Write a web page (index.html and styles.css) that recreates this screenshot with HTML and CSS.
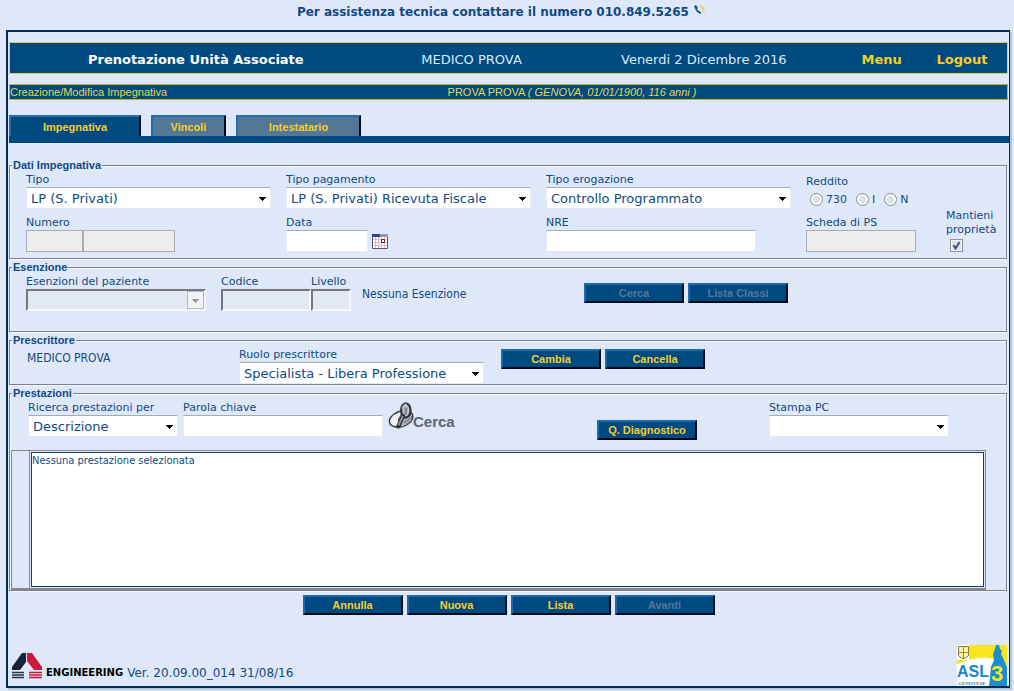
FILE: index.html
```html
<!DOCTYPE html>
<html lang="it">
<head>
<meta charset="utf-8">
<meta name="viewport" content="width=device-width, initial-scale=1">
<title>Prenotazione Unità Associate</title>
<link rel="stylesheet" href="styles.css">
</head>
<body>
<p class="support">Per assistenza tecnica contattare il numero 010.849.5265
  <svg class="phone" viewBox="0 0 14 12" aria-hidden="true"><path d="M1 2 3 1 5 4 4 5Q5 7 8 8L8 10Q3 9 1 2Z" fill="#1c5590"/><path d="M7 1Q12 2 12 8L10 9Q10 4 6 3Z" fill="#f7d672"/></svg>
</p>
<div class="frame">
  <header class="topbar">
    <h1>Prenotazione Unità Associate</h1>
    <span>MEDICO PROVA</span>
    <span>Venerdi 2 Dicembre 2016</span>
    <a href="#menu">Menu</a>
    <a href="#logout">Logout</a>
  </header>
  <div class="subbar">
    <span>Creazione/Modifica Impegnativa</span>
    <span>PROVA PROVA <i>( GENOVA, 01/01/1900, 116 anni )</i></span>
  </div>
  <nav class="tabs">
    <button type="button" class="tab tab-wide active">Impegnativa</button>
    <button type="button" class="tab tab-small">Vincoli</button>
    <button type="button" class="tab tab-medium">Intestatario</button>
  </nav>

  <form>
    <fieldset>
      <legend>Dati Impegnativa</legend>
      <div class="data-grid">
        <div class="field"><label for="tipo">Tipo</label><select id="tipo" class="w-select"><option>LP (S. Privati)</option></select></div>
        <div class="field"><label for="pagamento">Tipo pagamento</label><select id="pagamento" class="w-select"><option>LP (S. Privati) Ricevuta Fiscale</option></select></div>
        <div class="field"><label for="erogazione">Tipo erogazione</label><select id="erogazione" class="w-select"><option>Controllo Programmato</option></select></div>
        <div class="field income" role="radiogroup" aria-labelledby="reddito">
          <span id="reddito">Reddito</span>
          <div class="radios">
            <label><input type="radio" name="reddito">730</label>
            <label><input type="radio" name="reddito">I</label>
            <label><input type="radio" name="reddito">N</label>
          </div>
        </div>
        <div class="field keep"><label for="mantieni">Mantieni proprietà</label><input type="checkbox" id="mantieni" checked></div>
        <div class="field"><label for="numero">Numero</label>
          <div class="row"><input id="numero" class="w-num1" type="text" disabled><input class="w-num2" type="text" aria-label="Numero, seconda parte" disabled></div></div>
        <div class="field"><label for="data">Data</label>
          <div class="row date-row"><input id="data" class="w-date" type="text">
            <button type="button" class="icon-button" aria-label="Calendario"><svg class="calendar" viewBox="0 0 16 15" aria-hidden="true"><path fill="#fff" d="M0 0h16v15H0z"/><path d="M1 5.500h14M1 8.500h14M1 11.500h14M3.500 3v11M6.500 3v11M9.500 3v11M12.500 3v11" stroke="#e3b9bd"/><path fill="#34419a" d="M0 0h8v3H0z"/><path fill="#9298ad" d="M8 0h8v3H8z"/><path d="M.5 3v11.500h15V3" fill="none" stroke="#55546c"/><path d="M9.500 5.500h3v3h-3z" fill="#fff" stroke="#6d2434"/></svg></button></div></div>
        <div class="field"><label for="nre">NRE</label><input id="nre" class="w-nre" type="text"></div>
        <div class="field"><label for="scheda">Scheda di PS</label><input id="scheda" class="w-ps" type="text" disabled></div>
      </div>
    </fieldset>

    <fieldset>
      <legend>Esenzione</legend>
      <div class="line exemption">
        <div class="field"><label for="esenzioni">Esenzioni del paziente</label><select id="esenzioni" class="w-exempt sunken" disabled><option></option></select></div>
        <div class="field code"><label for="codice">Codice</label><input id="codice" class="w-code sunken" type="text" disabled></div>
        <div class="field"><label for="livello">Livello</label><input id="livello" class="w-level sunken" type="text" disabled></div>
        <span class="plain">Nessuna Esenzione</span>
        <div class="actions">
          <button type="button" class="btn" disabled>Cerca</button>
          <button type="button" class="btn" disabled>Lista Classi</button>
        </div>
      </div>
    </fieldset>

    <fieldset>
      <legend>Prescrittore</legend>
      <div class="line prescriber">
        <span class="plain">MEDICO PROVA</span>
        <div class="field"><label for="ruolo">Ruolo prescrittore</label><select id="ruolo" class="w-select"><option>Specialista - Libera Professione</option></select></div>
        <div class="actions">
          <button type="button" class="btn">Cambia</button>
          <button type="button" class="btn">Cancella</button>
        </div>
      </div>
    </fieldset>

    <fieldset class="services">
      <legend>Prestazioni</legend>
      <div class="line search">
        <div class="field"><label for="ricerca">Ricerca prestazioni per</label><select id="ricerca" class="w-search"><option>Descrizione</option></select></div>
        <div class="field"><label for="parola">Parola chiave</label><input id="parola" class="w-key" type="text"></div>
        <button type="button" class="find">
          <svg viewBox="0 0 32 30" aria-hidden="true"><ellipse cx="14" cy="18" rx="13" ry="8" fill="#f0f1f3" stroke="#3b3d43" stroke-width="1.500" transform="rotate(-20 14 18)"/><path d="M14 27Q8 20 14 14 20 10 26 16L25 21Q20 26 14 27Z" fill="#aeb3bb" stroke="#34363c"/><path d="M17 18 23 14M17 22 25 17M19 24 25 20" stroke="#5f6570"/><ellipse cx="19" cy="9" rx="5" ry="7.500" fill="#c5cbd3" stroke="#34363c" stroke-width="2.500"/><path d="M15 7Q16 2 20 2.500" fill="none" stroke="#d6dae0"/><path d="M16 15 11 26" stroke="#2e3036" stroke-width="4.500" stroke-linecap="round"/><path d="M16 15 11 25" stroke="#9399a3" stroke-width="2"/><path d="M17 6h4l-1 8h-2z" fill="#7d8791"/></svg><span>Cerca</span>
        </button>
        <button type="button" class="btn diagnostic">Q. Diagnostico</button>
        <div class="field"><label for="stampa">Stampa PC</label><select id="stampa" class="w-print"><option></option></select></div>
      </div>
      <div class="results">
        <div class="gutter"></div>
        <div class="list">Nessuna prestazione selezionata</div>
      </div>
    </fieldset>

    <div class="bottom-actions">
      <button type="button" class="btn">Annulla</button>
      <button type="button" class="btn">Nuova</button>
      <button type="button" class="btn">Lista</button>
      <button type="button" class="btn" disabled>Avanti</button>
    </div>
  </form>

  <footer>
    <svg class="eng-mark" viewBox="0 0 30 26" aria-hidden="true"><path fill="#172238" d="M10 0h4v9L8 17H0v-3z"/><path fill="#ce1738" d="M15 0h5l10 14v3h-8l-7-9z"/><path d="M0 19.500h12M0 22h12M0 24.500h12" stroke="#27303b" stroke-width="1.500"/><path d="M17 19.500h13M17 22h13M17 24.500h13" stroke="#ce1738" stroke-width="1.500"/></svg>
    <strong class="brand">ENGINEERING</strong>
    <span class="version">Ver. 20.09.00_014 31/08/16</span>
    <svg class="asl" viewBox="0 0 50 41" role="img" aria-label="ASL 3 Genovese">
      <path fill="#fff" d="M0 0h50v41H0z"/><path fill="#f7e51d" d="M12 0h38v20L30 14 0 19v-4h12z"/>
      <path fill="#fff" d="M0 20Q18 10 37 14v8L0 27z"/>
      <path fill="#fbf4a0" stroke="#82753b" d="M1.500 1.500h10v9q-5 6-10 0z"/><path stroke="#a98144" d="M6.500 1v13M1 7.500h11"/>
      <path fill="#1b8fce" d="M38 4l1-4h3l1 4 2 2-1 3 3 6 3 7v19H32l2-19 3-7-1-6z"/>
      <text x="0" y="32" class="asl-name">ASL</text>
      <text x="34" y="36" class="asl-three">3</text>
      <text x="1" y="40" class="asl-city">GENOVESE</text>
    </svg>
  </footer>
</div>
</body>
</html>
```
FILE: styles.css
```css
* { box-sizing: border-box; }
body {
  margin: 0;
  padding: 4px 4px 3px 6px;
  background: #dfe8f8;
  color: #0f4a86;
  font: 11px/14px "DejaVu Sans", Verdana, sans-serif;
}
button, input, select { font: inherit; color: inherit; margin: 0; border-radius: 0; }
a { text-decoration: none; }
.support { margin: 0; padding-right: 12px; height: 26px; line-height: 16px; font-size: 12px; font-weight: bold; text-align: center; }
.phone { width: 14px; height: 12px; }

.frame {
  min-height: calc(100vh - 33px);
  display: flex;
  flex-direction: column;
  border: 2px solid #002b55;
  border-right-width: 1px;
  box-shadow: 2px 2px 0 #b4c8dd;
  padding: 10px 1px 0 1px;
}
.topbar {
  display: grid;
  grid-template-columns: 372fr 180fr 285fr 71fr 90fr;
  align-items: center;
  justify-items: center;
  height: 32px;
  padding-top: 3px;
  border: 1px solid #e3c944;
  background: #004a82;
  color: #d9ecff;
  font-size: 13px;
}
.topbar h1 { margin: 0; font-size: 13px; color: #fff; }
.topbar a { color: #f5ce2b; font-weight: bold; }
.subbar {
  display: grid;
  grid-template-columns: 438fr 560fr;
  margin-top: 10px;
  height: 16px;
  border: 1px solid #c5b32c;
  background: #004a82;
  color: #e3d84b;
  font: 11px/14px "Liberation Sans", Arial, sans-serif;
}
.tabs { display: flex; gap: 10px; margin: 15px -1px 0 0; border-bottom: 7px solid #004a82; }
.tab {
  height: 21px;
  border: 2px solid #226eb4;
  border-right-color: #000a18;
  border-bottom: 0;
  padding: 0;
  background: #527896;
  color: #f5ce2b;
  font: bold 11px/14px "Liberation Sans", Arial, sans-serif;
}
.tab.active { background: #004a82; }
.tab-wide { width: 132px; }
.tab-small { width: 75px; }
.tab-medium { width: 125px; }

form { padding-top: 15px; }
fieldset {
  margin: 0 1px 1px 0;
  min-width: 0;
  padding: 0 0 0 1px;
  border: 1px solid #7d818f;
  box-shadow: 1px 1px 0 #f3f6fb, inset 1px 1px 0 #f3f6fb;
}
legend { margin-left: 1px; padding: 0 1px; background: #dfe8f8; font: bold 11px/14px "Liberation Sans", Arial, sans-serif; }
.field { display: flex; flex-direction: column; align-items: flex-start; }
.row { display: flex; }
input[type="text"], select {
  height: 22px;
  border: 1px solid #e4e9f3;
  border-top-color: #a4abb9;
  background-color: #fff;
  padding: 1px 4px 0;
  font-size: 13px;
}
select {
  appearance: none;
  background-image: linear-gradient(#000, #000), linear-gradient(#000, #000), linear-gradient(#000, #000), linear-gradient(#000, #000);
  background-repeat: no-repeat;
  background-size: 7px 1px, 5px 1px, 3px 1px, 1px 1px;
  background-position: right 4px top 9px, right 5px top 10px, right 6px top 11px, right 7px top 12px;
}
input[type="text"]:disabled { background: #eeeeee; border: 1px solid #a9adb3; }
input[type="text"].sunken:disabled, select.sunken:disabled {
  background-color: #e3e9f2;
  border: 2px solid;
  border-color: #74777f #f5f8fc #f5f8fc #74777f;
  opacity: 1;
}
select.sunken:disabled {
  background-image: linear-gradient(#9b9b9b, #9b9b9b), linear-gradient(#9b9b9b, #9b9b9b), linear-gradient(#9b9b9b, #9b9b9b), linear-gradient(#9b9b9b, #9b9b9b), linear-gradient(#f3f3f4, #f3f3f4), linear-gradient(#b5b8be, #b5b8be);
  background-size: 7px 1px, 5px 1px, 3px 1px, 1px 1px, 15px 16px, 17px 18px;
  background-position: right 5px top 8px, right 6px top 9px, right 7px top 10px, right 8px top 11px, right 1px top 1px, right 0 top 0;
}
.w-select { width: 245px; }
.w-num1 { width: 57px; }
.w-num2 { width: 92px; }
.w-date { width: 82px; }
.w-nre { width: 210px; }
.w-ps { width: 110px; }
.w-exempt { width: 180px; }
.w-code { width: 90px; }
.w-level { width: 40px; }
.w-search { width: 150px; }
.w-key { width: 200px; }
.w-print { width: 180px; }

.data-grid {
  display: grid;
  grid-template-columns: 260fr 260fr 260fr 140fr 60fr;
  row-gap: 7px;
  padding: 1px 0 6px 15px;
}
.income { padding-top: 2px; }
.radios { display: flex; gap: 9px; padding: 4px 0 0 4px; }
.radios label { display: flex; align-items: flex-start; gap: 3px; }
input[type="radio"], input[type="checkbox"] { appearance: none; width: 13px; height: 13px; background: #eef1f4; border: 1px solid #8b9097; }
input[type="radio"] { border-radius: 50%; box-shadow: inset 0 0 0 2px #fff; background: #dfe2e5; }
input[type="checkbox"] {
  margin: 2px 0 0 4px;
  box-shadow: inset 0 0 0 1px #f5f7f9;
  background: #dfe4ec url("data:image/svg+xml,%3Csvg xmlns='http://www.w3.org/2000/svg' viewBox='0 0 11 11'%3E%3Cpath d='M2.500 5l2 3.500L8.500 2' fill='none' stroke='%23414f93' stroke-width='2'/%3E%3C/svg%3E");
}
.keep { grid-row: 1 / 3; grid-column: 5; padding-top: 36px; }
.date-row { align-items: center; gap: 4px; }
.icon-button { display: flex; padding: 0; border: 0; background: none; }
.calendar { width: 16px; height: 15px; }

.line { display: flex; align-items: flex-start; padding-top: 1px; }
.plain { font: 12px/14px "DejaVu Sans Condensed", Tahoma, sans-serif; }
.actions { display: flex; gap: 4px; }
.btn {
  width: 100px;
  height: 20px;
  padding: 0;
  border: 2px solid;
  border-color: #1c6ab2 #000a18 #000a18 #1c6ab2;
  background: #004a82;
  color: #f5ce2b;
  font: bold 11px/14px "Liberation Sans", Arial, sans-serif;
}
.btn:disabled { color: #54789a; }
.exemption { padding: 1px 218px 20px 15px; }
.exemption .code { margin-left: 15px; }
.exemption .plain { margin: 12px 0 0 11px; }
.exemption .actions { margin: 8px 0 0 auto; }
.prescriber { padding-left: 16px; }
.prescriber .plain { width: 212px; padding-top: 3px; }
.prescriber .actions { margin: 1px 0 0 17px; }
.search { padding: 1px 57px 0 17px; gap: 5px; }
.find { display: flex; align-items: center; padding: 0; border: 0; background: none; color: #5a6475; font: bold 15px/16px "Liberation Sans", Arial, sans-serif; }
.find svg { width: 30px; height: 30px; }
.find span { margin-left: -5px; padding-top: 12px; }
.diagnostic { margin: 19px 67px 0 auto; }
.results { display: flex; margin: 10px 20px 0 0; height: 140px; border: 1px solid #85878d; border-bottom-width: 2px; }
.gutter { width: 18px; border-right: 1px solid #85878d; }
.list { flex: 1; margin: 1px; border: 1px solid #123f70; background: #fff; padding: 1px 0; font: 11px/14px "DejaVu Sans Condensed", Tahoma, sans-serif; }
.bottom-actions { display: flex; justify-content: center; gap: 4px; padding-top: 3px; }

footer { display: flex; align-items: flex-end; margin-top: auto; padding-left: 3px; }
.eng-mark { width: 30px; height: 26px; margin-bottom: 7px; }
.brand { margin: 0 0 6px 4px; color: #000; font-size: 10px; }
.version { margin: 0 auto 6px 4px; font-size: 12px; }
.asl { width: 50px; height: 41px; margin-right: 1px; }
.asl-name { font: bold 16px "Liberation Sans", sans-serif; fill: #1686c9; }
.asl-three { font: bold 22px "Liberation Sans", sans-serif; fill: #f7e51d; }
.asl-city { font: bold 5px "Liberation Serif", serif; fill: #337aa5; }
```
